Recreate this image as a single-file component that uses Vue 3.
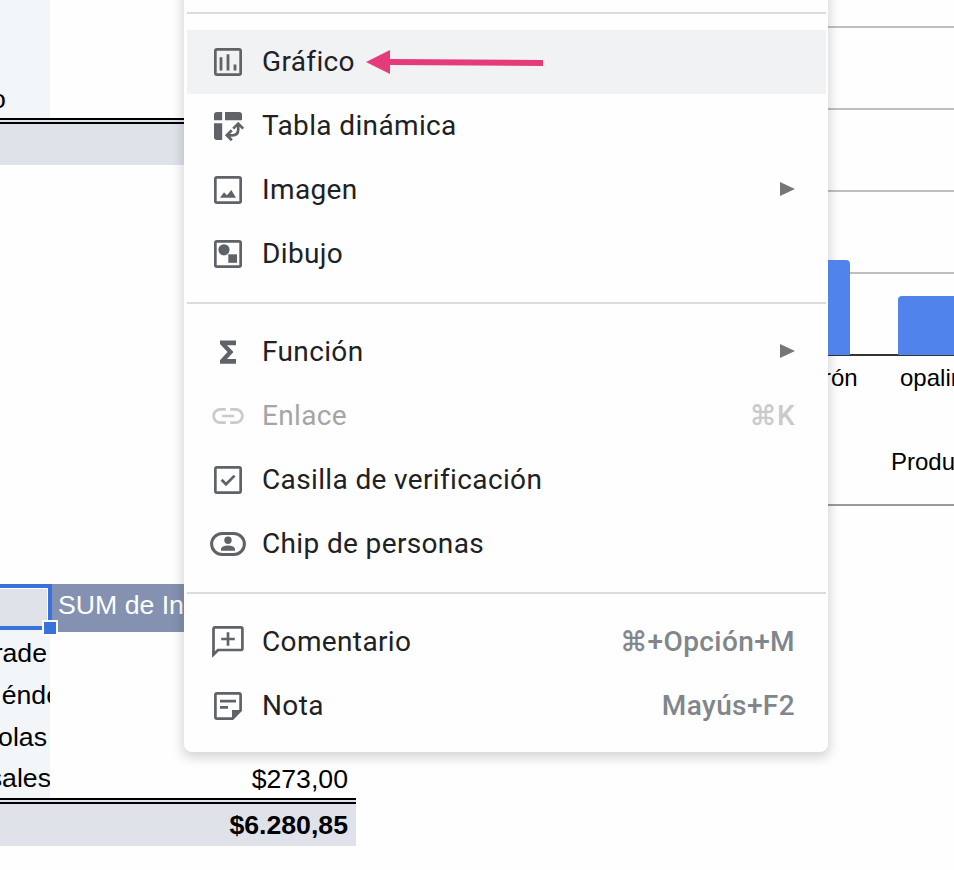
<script setup>
const names = [
  { text: 'rade', shift: 3 },
  { text: 'énde', shift: -11 },
  { text: 'olas', shift: 3 },
  { text: 'sales', shift: -1 },
]
const groups = [
  [
    { label: 'Gráfico', icon: 'chart', active: true },
    { label: 'Tabla dinámica', icon: 'pivot' },
    { label: 'Imagen', icon: 'image', sub: true },
    { label: 'Dibujo', icon: 'drawing' },
  ],
  [
    { label: 'Función', icon: 'sigma', sub: true },
    { label: 'Enlace', icon: 'link', cmd: true, keys: 'K', disabled: true },
    { label: 'Casilla de verificación', icon: 'check' },
    { label: 'Chip de personas', icon: 'chip' },
  ],
  [
    { label: 'Comentario', icon: 'comment', cmd: true, keys: '+Opción+M' },
    { label: 'Nota', icon: 'note', keys: 'Mayús+F2' },
  ],
]
</script>

<template>
  <div class="page">
    <div class="sheet">
      <div class="upper"><div class="name"><span>o</span></div></div>
      <div class="total"></div>
      <div class="space"></div>
      <div class="head">
        <div class="selected"><i class="handle"></i></div>
        <span>SUM de In</span>
      </div>
      <div class="row" v-for="n in names" :key="n.text">
        <div class="name"><span :style="{ marginRight: n.shift + 'px' }">{{ n.text }}</span></div>
        <div class="value" v-if="n.text === 'sales'">$273,00</div>
      </div>
      <div class="total last">$6.280,85</div>
    </div>

    <div class="chart">
      <div class="plot">
        <div class="grid"><i v-for="n in 5" :key="n"></i></div>
        <div class="bars">
          <div class="bar first"></div>
          <div class="bar second"></div>
        </div>
      </div>
      <div class="labels"><span class="l1">rón</span><span class="l2">opalina</span></div>
      <div class="axis">Producto</div>
    </div>

    <div class="menu">
      <div class="group" v-for="(g, i) in groups" :key="i">
        <div class="item" v-for="m in g" :key="m.label" :class="{ active: m.active, disabled: m.disabled }">
          <svg class="icon" viewBox="0 0 36 36" fill="none" stroke="currentColor" stroke-width="2.7">
            <rect v-if="['chart', 'image', 'drawing', 'check'].includes(m.icon)" x="5.35" y="5.35" width="25.3" height="25.3" rx="1.6" />
            <path v-if="m.icon === 'chart'" d="M11 13.3V26.5M18 10.3V26.5M25 20.5V26.5" stroke-width="2.8" />
            <g v-if="m.icon === 'pivot'">
              <path d="M7 4H12.2V12.2H4V7Q4 4 7 4ZM15 4H29Q32 4 32 7V12.2H15ZM4 15.2H12.2V32H7Q4 32 4 29Z" fill="currentColor" stroke="none" />
              <path d="M21.8 22.3 16.8 27.3 21.8 32.3M23.2 20.6 28.2 15.6 33.2 20.6M28.2 16.5V21.5Q28.2 27.3 22.4 27.3H17.5" />
            </g>
            <path v-if="m.icon === 'image'" d="M10 25.7 14 20.3 17 23.3 21.3 18 26 25.7Z" fill="currentColor" stroke="none" />
            <g v-if="m.icon === 'drawing'" fill="currentColor" stroke="none">
              <circle cx="14" cy="13.8" r="5.6" />
              <rect x="18.3" y="18.3" width="8.7" height="8.5" />
            </g>
            <path v-if="m.icon === 'sigma'" d="M10 6.5H26V11.2H17L23.5 18 17 25H26V29.8H10V26.3L17.5 18 10 10Z" fill="currentColor" stroke="none" />
            <path v-if="m.icon === 'link'" d="M15.8 11.3H10.3A6.7 6.7 0 0 0 10.3 24.7H15.8M20.2 11.3H25.7A6.7 6.7 0 0 1 25.7 24.7H20.2M12 18H24" />
            <path v-if="m.icon === 'check'" d="M11.6 17.8 16 22.3 24.6 13.6" />
            <g v-if="m.icon === 'chip'">
              <rect x="1.6" y="7.5" width="32.8" height="21" rx="10.5" stroke-width="3" />
              <circle cx="18" cy="14.3" r="3.7" fill="currentColor" stroke="none" />
              <path d="M11 24.7V23Q11.5 19.4 18 19.4T25 23V24.7Z" fill="currentColor" stroke="none" />
            </g>
            <g v-if="m.icon === 'comment'">
              <path d="M3.5 30.5V5Q3.5 3.4 5 3.4H30.8Q32.4 3.4 32.4 5V24.4Q32.4 26 30.8 26H8Z" />
              <path d="M2.1 33.5V27H8.5Z" fill="currentColor" stroke="none" />
              <path d="M18 8.2V21.8M11.2 15H24.8" />
            </g>
            <g v-if="m.icon === 'note'">
              <path d="M22.5 30.6H7Q5.4 30.6 5.4 29V7Q5.4 5.4 7 5.4H29Q30.6 5.4 30.6 7V22.5ZM10 13.2H26M10 19.3H18" />
              <path d="M22 22H32L22 32Z" fill="currentColor" stroke="none" />
            </g>
          </svg>
          <span class="label">{{ m.label }}</span>
          <span class="keys" v-if="m.keys"><span class="cmd" v-if="m.cmd">⌘</span>{{ m.keys }}</span>
          <svg class="sub" v-if="m.sub" viewBox="0 0 15 14"><path d="M0 0 15 7 0 14Z" fill="#767676" /></svg>
        </div>
      </div>
    </div>

    <svg class="arrow" viewBox="0 0 178 26">
      <path d="M24 10 177 11V17L24 16Z" />
      <path d="M0 13 24 1V25Z" />
    </svg>
  </div>
</template>

<style>
body {
  background: #fefefe;
}
</style>
<style scoped>
.page {
  position: relative;
  display: flex;
  justify-content: space-between;
  width: 954px;
  height: 870px;
  overflow: hidden;
  font-family: "Liberation Sans", Arial, sans-serif;
  font-size: 26.67px;
  color: #000;
}
.sheet {
  width: 356px;
}
.upper {
  display: flex;
  height: 118px;
}
.name {
  display: flex;
  justify-content: flex-end;
  align-items: center;
  width: 50px;
  overflow: hidden;
  background: #f3f6f9;
}
.upper .name {
  align-items: flex-end;
}
.upper .name span {
  width: 59px;
  flex-shrink: 0;
  line-height: 38px;
}
.total {
  box-sizing: border-box;
  height: 47px;
  border-top: 6px double #000;
  background: #dfe2e9;
}
.space {
  height: 419px;
}
.head {
  display: flex;
  height: 48px;
  line-height: 42px;
  background: #8491b1;
  color: #fff;
}
.selected {
  position: relative;
  box-sizing: border-box;
  width: 52px;
  height: 46px;
  margin-right: 6px;
  border: 4px solid #3a72dc;
  border-left: 0;
  background: #dfe2e9;
  box-shadow: inset -1px 1px #fff, 0 2px #f3f6f9;
}
.handle {
  position: absolute;
  right: -8px;
  bottom: -8px;
  width: 12px;
  height: 12px;
  background: #3a72dc;
  box-shadow: 0 0 0 2px #fff;
}
.row {
  display: flex;
  justify-content: space-between;
  height: 42px;
  line-height: 42px;
}
.row:nth-child(8) {
  height: 40px;
}
.row .name span {
  flex-shrink: 0;
}
.value {
  padding-right: 8px;
}
.last {
  height: 48px;
  padding-right: 8px;
  line-height: 42px;
  text-align: right;
  font-weight: bold;
}
.chart {
  box-sizing: border-box;
  width: 126px;
  height: 506px;
  overflow: hidden;
  border-bottom: 2px solid #9a9a9a;
  font-size: 24px;
  white-space: nowrap;
}
.plot {
  display: grid;
  height: 356px;
}
.grid,
.bars {
  grid-area: 1 / 1;
}
.grid {
  display: flex;
  flex-direction: column;
}
.grid i {
  box-sizing: border-box;
  height: 82px;
  border-bottom: 2px solid #bfbfbf;
}
.grid i:first-child {
  height: 28px;
}
.grid i:last-child {
  border-color: #333;
}
.bars {
  display: flex;
  align-items: flex-end;
  gap: 48px;
  z-index: 1;
}
.bar {
  background: #5083eb;
}
.first {
  width: 22px;
  height: 95px;
  margin-bottom: 1px;
  border-radius: 0 4px 0 0;
}
.second {
  width: 56px;
  height: 59px;
  margin-bottom: 1px;
  border-radius: 4px 0 0 0;
}
.labels {
  display: flex;
  height: 44px;
  line-height: 44px;
}
.l1 {
  flex: 0 0 77px;
  margin-left: -5px;
}
.axis {
  padding-left: 63px;
  margin-top: 40px;
  line-height: 44px;
}
.menu {
  position: absolute;
  left: 184px;
  top: -50px;
  box-sizing: border-box;
  width: 644px;
  height: 802px;
  padding: 62px 2px 0 3px;
  border-radius: 8px;
  background: #fefefe;
  box-shadow: 0 4px 12px 2px rgba(0, 0, 0, 0.16);
  font-family: Roboto, sans-serif;
  font-size: 28px;
  color: #202124;
}
.group {
  padding: 16px 0;
  border-top: 2px solid #dadce0;
}
.item {
  display: flex;
  align-items: center;
  height: 64px;
  padding: 0 31px 0 23px;
}
.active {
  background: #f0f2f4;
}
.icon {
  width: 36px;
  height: 36px;
  margin-right: 16px;
  color: #5f6368;
}
.label {
  flex: 1;
  padding-bottom: 2px;
  letter-spacing: 0.36px;
}
.keys {
  display: flex;
  align-items: center;
  padding-bottom: 2px;
  color: #80868b;
  font-weight: 500;
  letter-spacing: 0.4px;
}
.cmd {
  font-family: "DejaVu Sans", sans-serif;
  font-weight: normal;
  font-size: 27px;
  -webkit-text-stroke: 0.4px currentColor;
}
.disabled .label {
  color: #a4a5a7;
}
.disabled .icon,
.disabled .keys {
  color: #c9cacc;
}
.sub {
  width: 15px;
  height: 14px;
  margin-bottom: 2px;
}
.arrow {
  position: absolute;
  left: 366px;
  top: 49px;
  width: 178px;
  height: 26px;
  fill: #e63b7a;
}
</style>
